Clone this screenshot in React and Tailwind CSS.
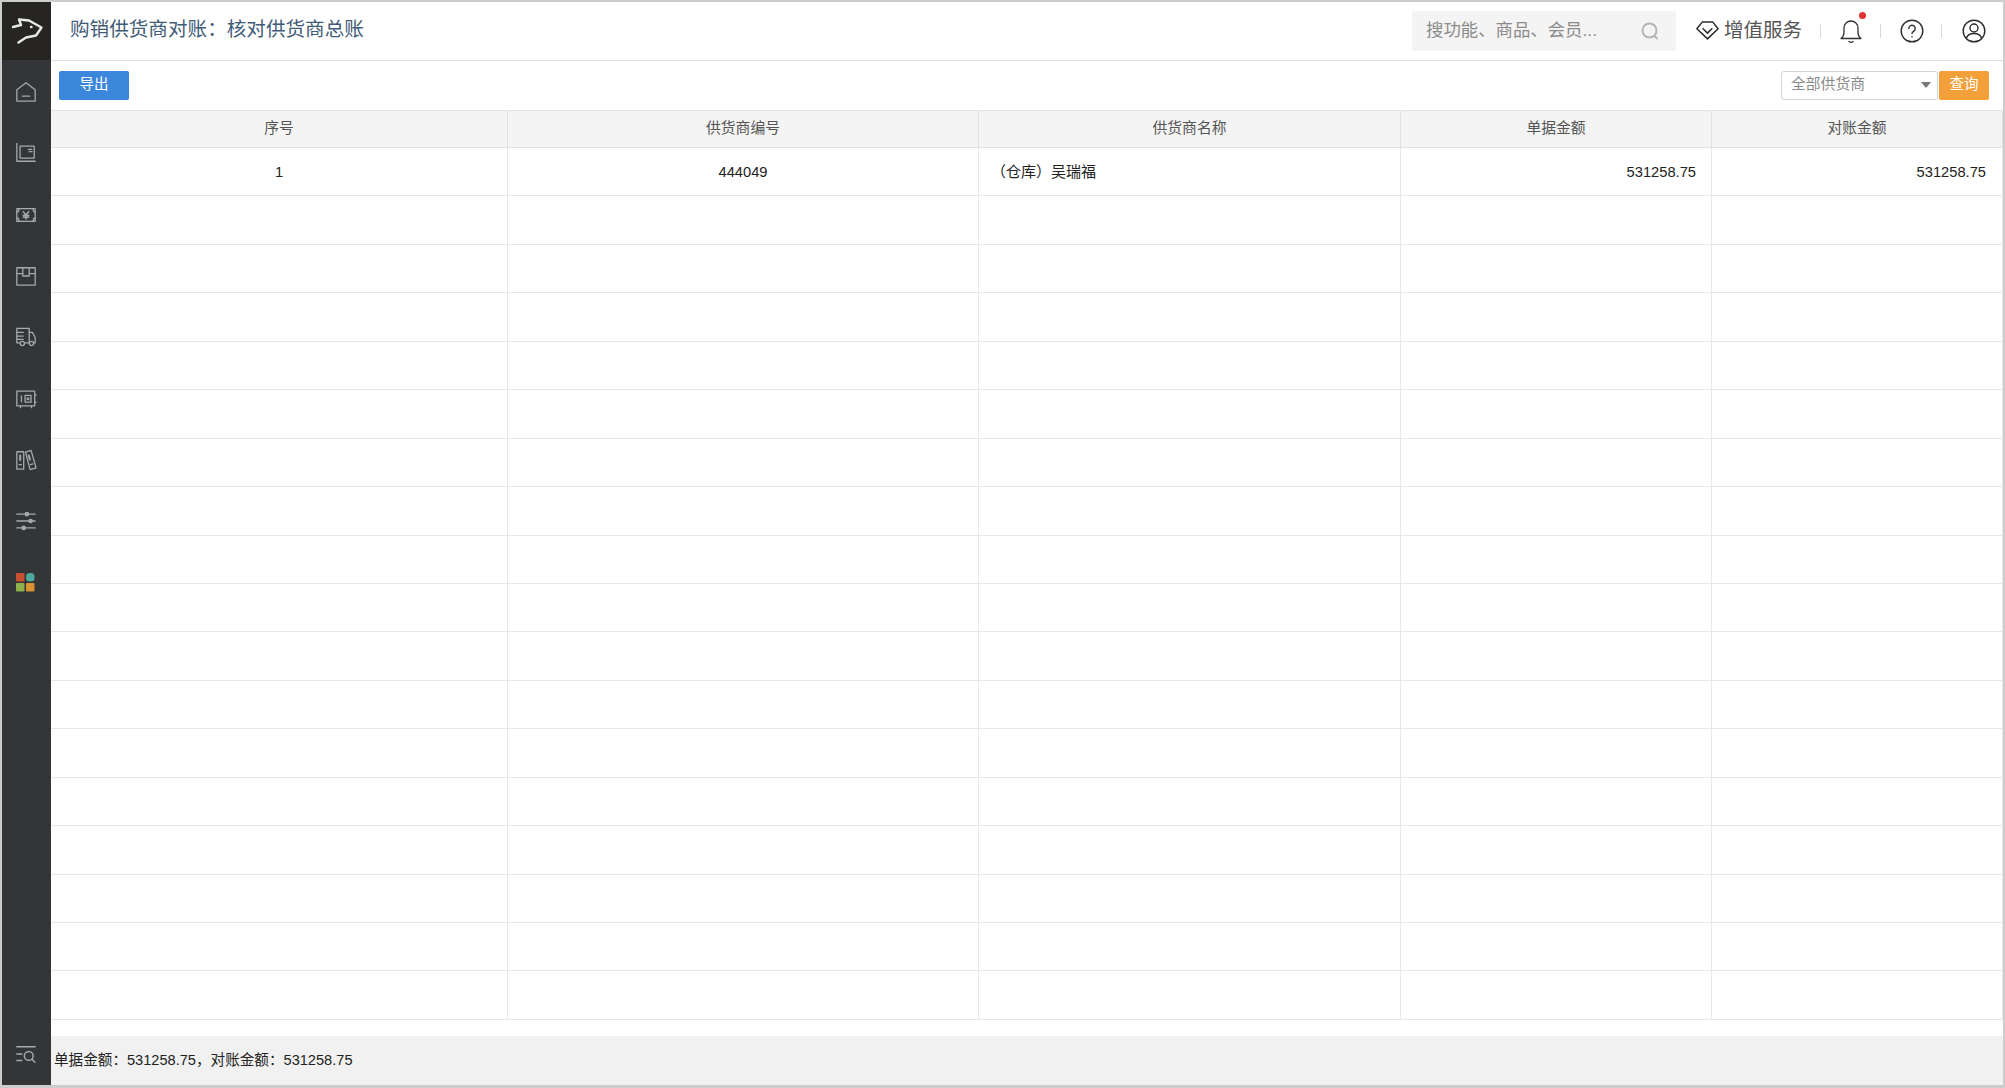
import { Fragment } from 'react';

const ICON = '#a8a9aa';

function SideIcon({ children }) {
  return (
    <svg width="22" height="22" viewBox="0 0 24 24" fill="none" stroke={ICON} strokeWidth="1.400" strokeLinejoin="round" strokeLinecap="round">
      {children}
    </svg>
  );
}

const sideIcons = [
  <SideIcon key="home">
    <path d="M2 9.500 12 2l10 7.500V22H2z" />
    <path d="M8 16.500h8" />
  </SideIcon>,
  <SideIcon key="goods">
    <path d="M2 1.500V21h20" />
    <path d="M5.500 4.500H21v13H5.500z" />
    <path d="M14.500 8h4M15.500 10.500h3" />
  </SideIcon>,
  <SideIcon key="money">
    <path d="M2 5h20v14H2z" />
    <path d="M2 8.500h1.500l1-3.500M22 8.500h-1.500l-1-3.500M2 15.500h1.500l1 3.500M22 15.500h-1.500l-1 3.500" />
    <path d="m9 8.500 3 3.500 3-3.500M9 12.500h6M9 14.500h6M12 12v4.500" strokeWidth="1.600" />
  </SideIcon>,
  <SideIcon key="box">
    <path d="M2 3h20v19H2z" />
    <path d="M2 9.500h6.500M15.500 9.500H22M8.500 3v9h7V3" />
  </SideIcon>,
  <SideIcon key="truck">
    <path d="M5.500 18.500H2V2.500h13.500v16H11" />
    <path d="M15.500 7H19l3 5.500v6h-1.500M15.500 18.500h.5" />
    <path d="M2 7h7M2 11h7M2 14.500h7" />
    <circle cx="8" cy="19" r="2.300" />
    <circle cx="18" cy="19" r="2.300" />
  </SideIcon>,
  <SideIcon key="safe">
    <path d="M2 3.500h19.500v16H2z" />
    <path d="M21.500 7.500H23M21.500 15.500H23M6 19.500v2M18 19.500v2" />
    <path d="M7 8.500v6.500" />
    <path d="M11 8h6.500v7.500H11z" />
    <circle cx="14.200" cy="11.700" r="1" />
  </SideIcon>,
  <SideIcon key="books">
    <path d="M2 3h7.500v19H2z" />
    <path d="M11.500 3.500 17.500 1.500l5.500 19-6.500 2z" />
    <path d="M5.700 7v5M15 7l1.300 4.500" strokeWidth="2.200" />
    <path d="M4.500 17h2.500M17 17l2.500-.7" />
  </SideIcon>,
  <SideIcon key="sliders">
    <path d="M2 4.500h20M2 12h20M2 19.500h20" />
    <circle cx="13" cy="4.500" r="1.800" fill={ICON} />
    <circle cx="17" cy="12" r="1.800" fill={ICON} />
    <circle cx="9.500" cy="19.500" r="1.800" fill={ICON} />
  </SideIcon>,
];

function Apps() {
  return (
    <svg width="22" height="22" viewBox="0 0 22 22">
      <rect x="1" y="1" width="8.500" height="8.500" rx="1" fill="#c9502e" />
      <rect x="11" y="1" width="8.500" height="8.500" rx="3.500" fill="#4ba89c" />
      <rect x="1" y="11" width="8.500" height="8.500" rx="1" fill="#8db04a" />
      <rect x="11" y="11" width="8.500" height="8.500" rx="1" fill="#d8922f" />
    </svg>
  );
}

function Sidebar() {
  return (
    <aside className="flex w-[49px] shrink-0 flex-col bg-[#333537]">
      <div className="flex h-[58px] items-center justify-center bg-[#272522]">
        <svg width="34" height="30" viewBox="9 16.500 34 30" fill="none" stroke="#e8e8e8" strokeWidth="2.400" strokeLinecap="round" strokeLinejoin="round">
          <path d="M12 27.500 20 25.500 18 20 28 21 40.500 28 35 36 25 38 17.500 43" />
          <path d="M30 27.500h.5" />
        </svg>
      </div>
      <div className="flex flex-col pl-[1px] pt-[1.500px] pr-[3px]">
        {sideIcons.map((icon, i) => (
          <div key={i} className="flex h-[61.300px] items-center justify-center">{icon}</div>
        ))}
        <div className="flex h-[61.300px] items-center justify-center"><Apps /></div>
      </div>
      <div className="mt-auto flex h-[61px] items-center justify-center pr-[2px]">
        <svg width="22" height="22" viewBox="0 0 24 24" fill="none" stroke={ICON} strokeWidth="1.600" strokeLinecap="round">
          <path d="M2 3h20M2 11h5.500M2 18h5.500" />
          <circle cx="15" cy="13" r="4.800" />
          <path d="m18.800 16.800 3 3" />
        </svg>
      </div>
    </aside>
  );
}

function Header() {
  return (
    <header className="flex h-[59px] shrink-0 items-center border-b border-[#dedede] pb-[1px] pl-[19px] pr-[17px]">
      <h1 className="relative -top-[1px] text-[19.600px] font-normal text-[#3f5b77]">购销供货商对账：核对供货商总账</h1>
      <div className="ml-auto flex h-[40px] w-[264px] items-center justify-between rounded-[3px] bg-[#f4f4f4] pl-[14px] pr-[16px]">
        <span className="text-[17.400px] text-[#8b8b8b]">搜功能、商品、会员...</span>
        <svg width="20" height="20" viewBox="0 0 20 20" fill="none" stroke="#b5b5b5" strokeWidth="2" strokeLinecap="round">
          <circle cx="9.500" cy="9.500" r="7" />
          <path d="m14.500 15 2.500 2.500" />
        </svg>
      </div>
      <svg className="ml-[20px]" width="23" height="21" viewBox="0 0 26 22" fill="none" stroke="#2c2c2c" strokeWidth="1.700" strokeLinejoin="round" strokeLinecap="round">
        <path d="M7 1.500h12l6 7.500-12 11.500L1 9z" />
        <path d="m8 9 5 5 5-5" />
      </svg>
      <span className="ml-[5px] text-[19.500px] text-[#555555]">增值服务</span>
      <div className="ml-[18px] h-[14px] w-[1px] bg-[#d8d8d8]" />
      <div className="relative ml-[19px] h-[24px] w-[22px]">
        <svg width="22" height="24" viewBox="0 0 22 24" fill="none" stroke="#333333" strokeWidth="1.300" strokeLinecap="round" strokeLinejoin="round">
          <path d="M1 19.500c2-1.500 3-3 3-6V9a7 7 0 0 1 14 0v4.500c0 3 1 4.500 3 6z" />
          <path d="M9 22.500c1 .8 3 .8 4 0" />
        </svg>
        <span className="absolute right-[-4px] top-[-7px] h-[7px] w-[7px] rounded-full bg-[#e0322e]" />
      </div>
      <div className="ml-[18px] h-[14px] w-[1px] bg-[#d8d8d8]" />
      <svg className="ml-[19px]" width="24" height="24" viewBox="0 0 24 24" fill="none" stroke="#2c2c2c" strokeWidth="1.400" strokeLinecap="round">
        <circle cx="12" cy="12" r="10.800" />
        <path d="M8.800 9.500a3.200 3.200 0 1 1 5 2.600c-1.200.8-1.800 1.400-1.800 2.400" />
        <path d="M12 17.500v.3" />
      </svg>
      <div className="ml-[17px] h-[14px] w-[1px] bg-[#d8d8d8]" />
      <svg className="ml-[20px]" width="24" height="24" viewBox="0 0 24 24" fill="none" stroke="#2c2c2c" strokeWidth="1.400" strokeLinecap="round">
        <circle cx="12" cy="12" r="10.800" />
        <circle cx="12" cy="9" r="4" />
        <path d="M4.500 19c1-3 4-4.500 7.500-4.500s6.500 1.500 7.500 4.500" />
      </svg>
    </header>
  );
}

function Toolbar() {
  return (
    <div className="flex h-[49px] shrink-0 items-center pb-[1px] pl-[8px] pr-[14px]">
      <button className="h-[29px] w-[70px] rounded-[2px] bg-[#3b87dc] text-[14.500px] text-white">导出</button>
      <div className="ml-auto flex h-[29px] w-[157px] items-center justify-between rounded-[3px] border border-[#d5d5d5] pb-[1px] pl-[9px] pr-[6px]">
        <span className="text-[14.800px] text-[#8a8a8a]">全部供货商</span>
        <span className="h-0 w-0 border-x-[5px] border-t-[6px] border-x-transparent border-t-[#777777]" />
      </div>
      <button className="ml-[1px] h-[29px] w-[50px] rounded-[2px] bg-[#f3a03a] text-[14.500px] text-white">查询</button>
    </div>
  );
}

const columns = ['序号', '供货商编号', '供货商名称', '单据金额', '对账金额'];
const GRID = 'grid grid-cols-[457px_471px_422px_311px_1fr]';

const blankRows = Array.from({ length: 17 }, (_, i) => i);

function Table() {
  return (
    <div className="text-[14.700px] text-[#222222]">
      <div className={`${GRID} h-[38px] border-y border-[#e2e2e2] bg-[#f4f4f4] pb-0 text-[14.800px] text-[#555555]`}>
        {columns.map((c) => (
          <div key={c} className="flex items-center justify-center border-r border-[#e0e0e0] pb-[2px]">{c}</div>
        ))}
      </div>
      <div className={`${GRID} auto-rows-[48.440px]`}>
        <div className="flex items-center justify-center border-b border-r border-[#e8e8e8]">1</div>
        <div className="flex items-center justify-center border-b border-r border-[#e8e8e8]">444049</div>
        <div className="flex items-center border-b border-r border-[#e8e8e8] pl-[12px] pt-[1px] text-[15px]">（仓库）吴瑞福</div>
        <div className="flex items-center justify-end border-b border-r border-[#e8e8e8] pr-[15px]">531258.75</div>
        <div className="flex items-center justify-end border-b border-r border-[#e8e8e8] pr-[16px]">531258.75</div>
        {blankRows.map((r) => (
          <Fragment key={r}>
            {columns.map((c) => (
              <div key={c} className="border-b border-r border-[#e8e8e8]" />
            ))}
          </Fragment>
        ))}
      </div>
    </div>
  );
}

export default function App() {
  return (
    <div className="flex h-[1088px] w-[2005px] border-b-[3px] border-l-2 border-r-2 border-t-2 border-[#cccccc] bg-white font-['Liberation_Sans','Noto_Sans_CJK_SC',sans-serif]">
      <Sidebar />
      <main className="flex min-w-0 flex-1 flex-col">
        <Header />
        <Toolbar />
        <Table />
        <footer className="mt-auto flex h-[49px] shrink-0 items-center bg-[#f1f1f1] pl-[3px] text-[14.600px] text-[#222222]">
          单据金额：531258.75，对账金额：531258.75
        </footer>
      </main>
    </div>
  );
}
